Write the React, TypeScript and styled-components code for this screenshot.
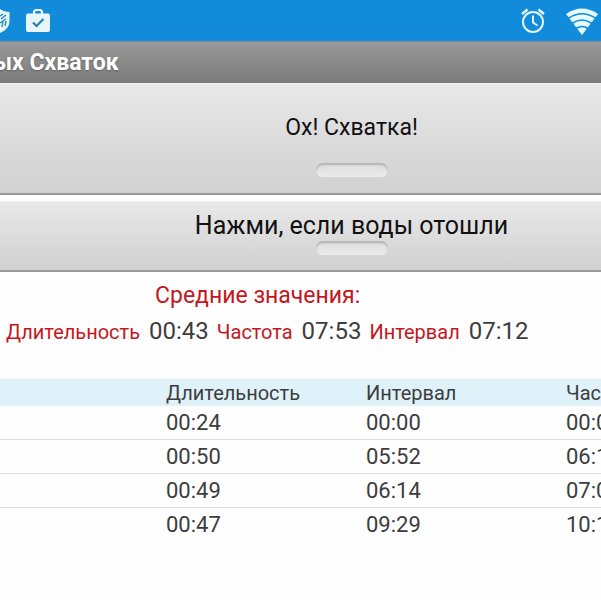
import React from "react";
import styled, { createGlobalStyle } from "styled-components";

const GlobalStyle = createGlobalStyle`
  * { box-sizing: border-box; }
  html { background: #fefefe; }
  body {
    margin: 0;
    overflow-x: hidden;
    color: #3d3d3d;
    font-family: Roboto, "Noto Sans", sans-serif;
  }
`;

const Screen = styled.main`
  width: 100%;
  overflow: hidden;
`;

const StatusBar = styled.div`
  display: flex;
  justify-content: space-between;
  height: 41px;
  padding-right: 3px;
  background: #128bdb;
`;

const StatusGroup = styled.div<{ $gap: number }>`
  display: flex;
  gap: ${(p) => p.$gap}px;
  height: 41px;
`;

const TitleBar = styled.header`
  height: 42px;
  background: linear-gradient(#989998, #7c7c7c);
  border-top: 1px solid #7e8c96;
  border-bottom: 1px solid #777;
`;

const Title = styled.h1`
  margin: 0 0 0 -7px;
  color: #fff;
  font-size: 23px;
  font-weight: 700;
  line-height: 42px;
  white-space: nowrap;
  text-shadow: 0 1px 2px rgba(60, 60, 60, 0.5);
`;

const Actions = styled.section`
  display: flex;
  flex-direction: column;
  gap: 6px;
`;

const ActionButton = styled.button<{ $tall?: boolean }>`
  display: flex;
  flex-direction: column;
  align-items: center;
  gap: ${(p) => (p.$tall ? 20 : 0)}px;
  width: 100%;
  padding: ${(p) => (p.$tall ? "29px 0 16px 102px" : "9px 0 15px 102px")};
  border: 0;
  border-top: 1px solid #f2f2f2;
  border-bottom: 2px solid #999;
  background: linear-gradient(#e8e8e8, #d1d1d1);
  color: #111;
  font-family: inherit;
  font-size: ${(p) => (p.$tall ? 23 : 25)}px;
  line-height: 30px;
  white-space: nowrap;
  cursor: pointer;
`;

const Indicator = styled.span`
  width: 72px;
  height: 14px;
  border-radius: 7px;
  background: linear-gradient(#dedede, #eaeaea);
  box-shadow: inset 0 2px 2px #b2b2b2, inset 0 -1px 1px #efefef;
`;

const Summary = styled.section`
  padding: 8px 0 0 6px;
`;

const SummaryTitle = styled.h2`
  margin: 0 0 0 149px;
  color: #c4161c;
  font-size: 23px;
  font-weight: 400;
  line-height: 32px;
`;

const Averages = styled.dl`
  display: flex;
  align-items: baseline;
  gap: 8px;
  margin: 0;
  line-height: 38px;
  white-space: nowrap;
`;

const Average = styled.div`
  display: flex;
  align-items: baseline;
  gap: 9px;
`;

const AverageLabel = styled.dt`
  color: #c4161c;
  font-size: 20px;
`;

const AverageValue = styled.dd`
  margin: 0;
  font-size: 24px;
`;

const History = styled.table`
  width: 100%;
  margin-top: 28px;
  table-layout: fixed;
  border-collapse: separate;
  border-spacing: 0;
  white-space: nowrap;
`;

const LeadColumn = styled.col`
  width: 166px;
`;

const ValueColumn = styled.col`
  width: 200px;
`;

const HeadCell = styled.th`
  height: 27px;
  padding: 2px 0 0;
  background: #e0f2f9;
  font-size: 20px;
  font-weight: 400;
  line-height: 25px;
  text-align: left;
`;

const Row = styled.tr`
  &:not(:last-child) > td {
    border-bottom: 1px solid #dedede;
  }
`;

const Cell = styled.td`
  height: 34px;
  padding: 0;
  font-size: 22px;
  line-height: 33px;
  vertical-align: top;
`;

const averages = [
  ["Длительность", "00:43"],
  ["Частота", "07:53"],
  ["Интервал", "07:12"],
];

const contractions = [
  ["00:24", "00:00", "00:00"],
  ["00:50", "05:52", "06:16"],
  ["00:49", "06:14", "07:04"],
  ["00:47", "09:29", "10:18"],
];

const ShieldIcon = () => (
  <svg width="10" height="41" viewBox="0 0 10 41" aria-hidden="true">
    <path d="M-10 12Q-4 12 0 9Q4 12 9.500 12V21Q9.500 29 0 33Z" fill="#e8f6fb" />
    <path
      d="M0 16L3 14M1 19L6 15M0 23L6 19M3 21L2 27M6 21L5 26"
      stroke="#2687bd"
      strokeWidth="1.4"
      fill="none"
    />
  </svg>
);

const BriefcaseIcon = () => (
  <svg width="24" height="41" viewBox="0 0 24 41" aria-hidden="true">
    <path
      d="M8 14V11.5L9.500 10H14.500L16 11.500V14"
      stroke="#e8f6fb"
      strokeWidth="2.200"
      fill="none"
    />
    <rect y="13.500" width="24" height="18.500" rx="2" fill="#e8f6fb" />
    <path d="M7 22.500L10.500 26L17.500 19" stroke="#2980ac" strokeWidth="2.200" fill="none" />
  </svg>
);

const AlarmIcon = () => (
  <svg width="24" height="41" viewBox="0 0 24 41" aria-hidden="true">
    <g fill="none" stroke="#e2f7ff" strokeWidth="2">
      <circle cx="12" cy="22" r="10" />
      <path d="M12 15.500V22.500L16.500 25.500" />
      <path d="M1 14L6.500 9.500M17.500 9.500L23 14" strokeWidth="2.400" />
    </g>
  </svg>
);

const WifiIcon = () => (
  <svg width="32" height="41" viewBox="0 0 32 41" aria-hidden="true">
    <path d="M0 14Q16 3 32 14L16 35Z" fill="#e5f9ff" />
    <g fill="none" stroke="#128bdb" strokeWidth="1.600">
      <path d="M2 18.500Q16 9 30 18.500" />
      <path d="M6 23.500Q16 16.500 26 23.500" />
      <path d="M10 28.500Q16 24.500 22 28.500" />
    </g>
  </svg>
);

export default function App() {
  return (
    <Screen>
      <GlobalStyle />
      <StatusBar>
        <StatusGroup $gap={16}>
          <ShieldIcon />
          <BriefcaseIcon />
        </StatusGroup>
        <StatusGroup $gap={21}>
          <AlarmIcon />
          <WifiIcon />
        </StatusGroup>
      </StatusBar>
      <TitleBar>
        <Title>ых Схваток</Title>
      </TitleBar>
      <Actions>
        <ActionButton type="button" $tall>
          Ох! Схватка!
          <Indicator />
        </ActionButton>
        <ActionButton type="button">
          Нажми, если воды отошли
          <Indicator />
        </ActionButton>
      </Actions>
      <Summary>
        <SummaryTitle>Средние значения:</SummaryTitle>
        <Averages>
          {averages.map(([label, value]) => (
            <Average key={label}>
              <AverageLabel>{label}</AverageLabel>
              <AverageValue>{value}</AverageValue>
            </Average>
          ))}
        </Averages>
      </Summary>
      <History>
        <colgroup>
          <LeadColumn />
          <ValueColumn />
          <ValueColumn />
          <col />
        </colgroup>
        <thead>
          <tr>
            <HeadCell />
            <HeadCell scope="col">Длительность</HeadCell>
            <HeadCell scope="col">Интервал</HeadCell>
            <HeadCell scope="col">Частота</HeadCell>
          </tr>
        </thead>
        <tbody>
          {contractions.map((values) => (
            <Row key={values[0]}>
              <Cell />
              {values.map((value, i) => (
                <Cell key={i}>{value}</Cell>
              ))}
            </Row>
          ))}
        </tbody>
      </History>
    </Screen>
  );
}
